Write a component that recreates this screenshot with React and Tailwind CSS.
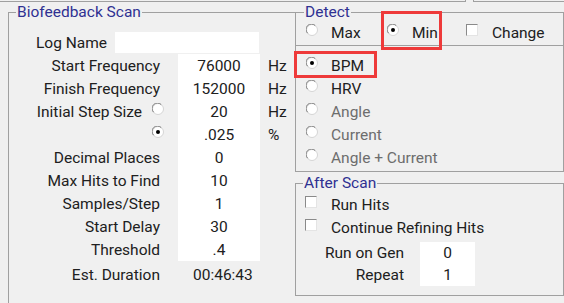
const Radio = ({ on }) => (
  <svg width="12" height="12" viewBox="0 0 12 12" className="shrink-0 mb-[6px]">
    <circle cx="6" cy="6" r="5.5" fill="#fff" stroke="#d4d4d4" />
    <path d="M1.6 9.2 A5.3 5.3 0 0 1 9.2 1.6" fill="none" stroke="#7c7c7c" />
    {on ? <circle cx="6" cy="6" r="2" fill="#000" /> : null}
  </svg>
);

const Check = () => (
  <span className="shrink-0 mb-[6px] w-[12px] h-[12px] bg-white border border-t-[#8a8a8a] border-l-[#8a8a8a] border-r-[#e4e4e4] border-b-[#e4e4e4]" />
);

const scanRows = [
  { label: "Start Frequency", value: "76000", unit: "Hz" },
  { label: "Finish Frequency", value: "152000", unit: "Hz" },
  { label: "Initial Step Size", value: "20", unit: "Hz", radio: "off" },
  { label: "", value: ".025", unit: "%", radio: "on" },
  { label: "Decimal Places", value: "0" },
  { label: "Max Hits to Find", value: "10" },
  { label: "Samples/Step", value: "1" },
  { label: "Start Delay", value: "30" },
  { label: "Threshold", value: ".4" },
];

const detectRows = [
  { label: "BPM", on: true },
  { label: "HRV" },
  { label: "Angle", off: true },
  { label: "Current", off: true },
  { label: "Angle + Current", off: true },
];

export default function App() {
  return (
    <div className="relative w-[564px] h-[303px] overflow-hidden bg-[#f0f0f0] font-['Roboto',sans-serif] text-[15.5px] leading-[18px] text-[#202020]">
      {/* bottoms of the boxes above */}
      <div className="flex h-[3px]">
        <div className="w-[466px] h-[2px] border-b border-r border-[#a0a0a0]" />
        <div className="ml-[7px] flex-1 h-[2px] border-b border-l border-[#a0a0a0]" />
      </div>

      <div className="flex">
        {/* Biofeedback Scan */}
        <fieldset className="ml-[8px] w-[287px] h-[320px] border-l border-t border-[#a0a0a0]">
          <legend className="ml-[7px] px-px text-[#2f3192]">Biofeedback Scan</legend>

          <div className="flex items-center h-[23px] mt-[10px]">
            <div className="w-[102px] pr-[4px] text-right">Log Name</div>
            <div className="ml-[4px] w-[144px] h-[21px] bg-white" />
          </div>

          {scanRows.map((r, i) => (
            <div key={i} className="flex items-center h-[23px]">
              <div className={["flex items-center justify-end w-[155px]", r.radio ? "" : "pr-[4px]"].join(" ")}>
                {r.label ? <span>{r.label}</span> : null}
                {r.radio ? (
                  <span className="ml-[10px] flex items-center h-[23px]">
                    <Radio on={r.radio === "on"} />
                  </span>
                ) : null}
              </div>
              <div className="ml-[14px] w-[82px] h-[23px] bg-white flex items-center justify-center">{r.value}</div>
              {r.unit ? <div className="ml-[8px]">{r.unit}</div> : null}
            </div>
          ))}

          <div className="flex items-center h-[23px] mt-[2px]">
            <div className="w-[155px] pr-[4px] text-right">Est. Duration</div>
            <div className="ml-[29px]">00:46:43</div>
          </div>
        </fieldset>

        <div className="flex flex-col w-[269px]">
          {/* Detect */}
          <fieldset className="border border-[#a0a0a0] pb-[2px]">
            <legend className="ml-[8px] px-px text-[#2f3192]">Detect</legend>
            <div className="flex items-center h-[25px] pl-[10px] border-b border-[#a0a0a0]">
              <div className="flex items-center w-[81px]">
                <Radio />
                <span className="ml-[13px]">Max</span>
              </div>
              <div className="flex items-center w-[79px]">
                <Radio on />
                <span className="ml-[13px]">Min</span>
              </div>
              <div className="flex items-center">
                <Check />
                <span className="ml-[14px]">Change</span>
              </div>
            </div>
            <div className="mt-[8px]">
              {detectRows.map((r) => (
                <div key={r.label} className="flex items-center h-[23px] pl-[10px]">
                  <Radio on={r.on} />
                  <span className={["ml-[13px]", r.off ? "text-[#6d6d6d]" : ""].join(" ")}>{r.label}</span>
                </div>
              ))}
            </div>
          </fieldset>

          {/* After Scan */}
          <fieldset className="mt-[2px] border border-[#a0a0a0] pb-[9px]">
            <legend className="ml-[7px] px-px text-[#2f3192]">After Scan</legend>
            <div className="flex items-center h-[23px] mt-[1px] pl-[9px]">
              <Check />
              <span className="ml-[14px]">Run Hits</span>
            </div>
            <div className="flex items-center h-[23px] pl-[9px]">
              <Check />
              <span className="ml-[14px]">Continue Refining Hits</span>
            </div>
            <div className="mt-[3px]">
              {[
                ["Run on Gen", "0"],
                ["Repeat", "1"],
              ].map(([l, v]) => (
                <div key={l} className="flex items-center h-[22px]">
                  <div className="w-[110px] pr-[2px] text-right">{l}</div>
                  <div className="ml-[14px] w-[55px] h-[22px] bg-white flex items-center justify-center">{v}</div>
                </div>
              ))}
            </div>
          </fieldset>
        </div>
      </div>

      {/* red highlight marks */}
      <div className="absolute left-[381px] top-[11px] w-[61px] h-[39px] border-[3px] border-[#ee3a3a]" />
      <div className="absolute left-[294px] top-[51px] w-[83px] h-[27px] border-[3px] border-[#ee3a3a]" />
    </div>
  );
}
